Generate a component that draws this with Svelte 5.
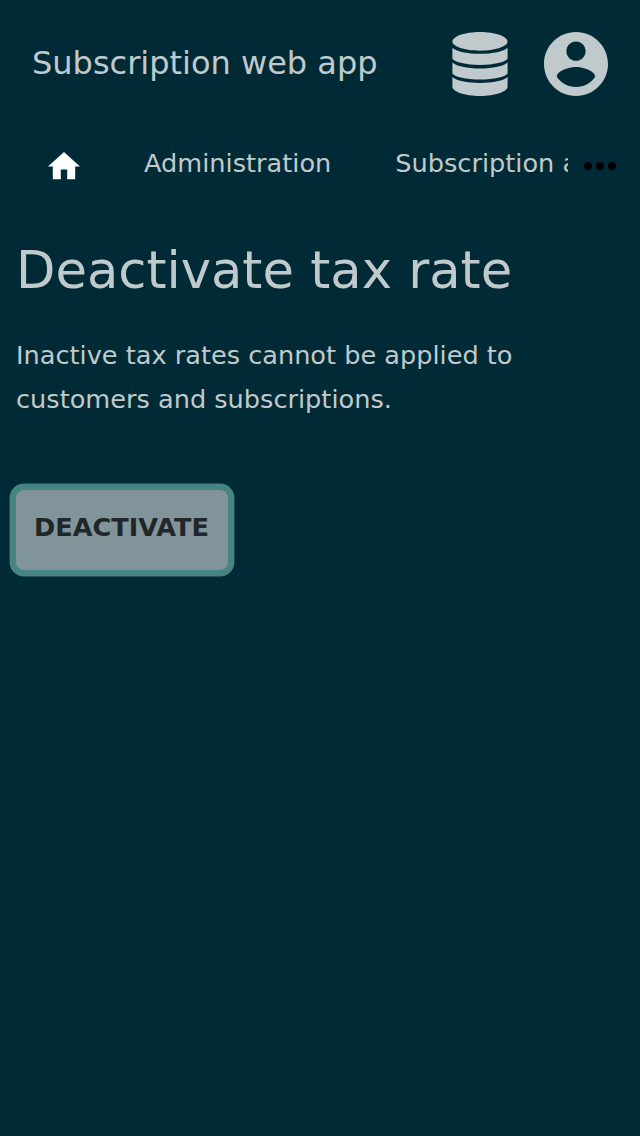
<script>
  const message = 'Inactive tax rates cannot be applied to customers and subscriptions.';
</script>

<header>
  <span class="brand">Subscription web app</span>
  <svg class="db" viewBox="0 0 56 64"><path d="M.4 9.800C.4 4.400 12.700 0 28 0s27.600 4.400 27.600 9.800C55.600 14.400 43.300 18.700 28 18.700S.4 14.400 .4 9.800zM.4 15.700C4 19.300 15 21.800 28 21.800s24-2.500 27.600-6.100v11.100C53 30.300 42 32.900 28 32.900S3 30.300 .4 26.800zM.4 30.500C4 34.100 15 36.500 28 36.500s24-2.400 27.600-6v11.100C53 45.100 42 47.600 28 47.600S3 45.100 .4 41.600zM.4 45.100C4 48.700 15 51 28 51s24-2.300 27.600-5.900V54.500C55.600 59.700 43.300 64 28 64S.4 59.700 .4 54.500z"/></svg>
  <svg class="user" viewBox="2 2 20 20"><path d="M12 2C6.480 2 2 6.480 2 12s4.480 10 10 10 10-4.480 10-10S17.520 2 12 2zm0 3c1.660 0 3 1.340 3 3s-1.340 3-3 3-3-1.340-3-3 1.340-3 3-3zm0 14.200c-2.500 0-4.710-1.280-6-3.220.030-1.990 4-3.080 6-3.080 1.990 0 5.970 1.090 6 3.080-1.290 1.940-3.500 3.220-6 3.220z"/></svg>
</header>
<nav>
  <div class="tabs">
    <svg class="home" viewBox="2 3 20 17"><path d="M10 20v-6h4v6h5v-8h3L12 3 2 12h3v8z"/></svg>
    <span>Administration</span>
    <span>Subscription administration</span>
  </div>
  <svg class="more" viewBox="0 0 32 8"><circle cx="4" cy="4" r="4"/><circle cx="16" cy="4" r="4"/><circle cx="28" cy="4" r="4"/></svg>
</nav>
<main>
  <h1>Deactivate tax rate</h1>
  <p>{message}</p>
  <button>DEACTIVATE</button>
</main>

<style>
  :global(body) { background: #002b36; color: #c0cacc; font-family: "DejaVu Sans", sans-serif; font-size: 26px; }
  header { display: flex; align-items: center; height: 128px; padding: 0 32px; box-sizing: border-box; fill: #c0cacc; }
  .brand { font-size: 32px; line-height: 48px; margin: -2px auto 0 0; }
  .db { width: 56px; height: 64px; margin-right: 36px; }
  .user { width: 64px; height: 64px; }
  nav { display: flex; align-items: center; height: 76px; padding-right: 24px; }
  .tabs { display: flex; align-items: center; width: 568px; overflow: hidden; white-space: nowrap; gap: 64px; padding-left: 48px; box-sizing: border-box; font-size: 25.600px; line-height: 38px; }
  .tabs span { flex: none; margin-top: -6px; }
  .home { width: 32px; height: 27.200px; fill: #fff; flex: none; }
  .more { width: 32px; height: 8px; margin-left: 16px; fill: #000; }
  main { padding: 35px 16px; }
  h1 { margin: 0; font-size: 51.200px; line-height: 62px; font-weight: 400; }
  p { margin: 32px 0 69px; font-size: 25.600px; line-height: 44px; }
  button { display: block; width: 212px; height: 80px; padding: 0 1px 6px 0; border: 0; border-radius: 8px; background: #80949a; color: #212729; box-shadow: 0 0 0 6.400px #468481; font: bold 25.600px "DejaVu Sans", sans-serif; }
</style>
